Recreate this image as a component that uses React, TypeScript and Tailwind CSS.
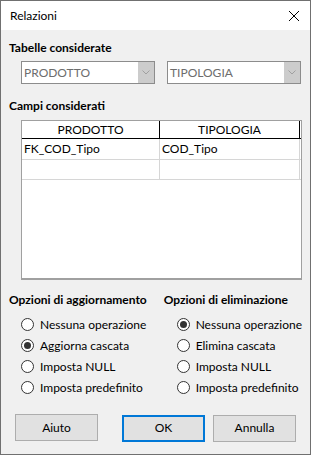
import * as React from "react";

const font = { fontFamily: '"Lato", "Noto Sans", sans-serif' };

const Radio = ({ checked, label }: { checked?: boolean; label: string }) => (
  <div className="flex items-center h-[21px] whitespace-nowrap">
    <span className="w-[13px] h-[13px] rounded-full border border-[#333] bg-white flex items-center justify-center">
      {checked && <span className="w-[7px] h-[7px] rounded-full bg-[#333]" />}
    </span>
    <span className="ml-[6px] text-[12px] text-black leading-none">{label}</span>
  </div>
);

const Combo = ({ value }: { value: string }) => (
  <div className="flex w-[134px] h-[23px] border border-[#8c8c8c] bg-white">
    <div className="flex-1 flex items-center pl-[2px] text-[12px] text-[#6d6d6d]">{value}</div>
    <div className="w-[16px] bg-[#cccccc] flex items-center justify-center">
      <svg width="8" height="5" viewBox="0 0 8 5">
        <path d="M0.5 0.5 L4 4 L7.5 0.5" fill="none" stroke="#a0a0a0" strokeWidth="1" />
      </svg>
    </div>
  </div>
);

const Button = ({ label, focused }: { label: string; focused?: boolean }) => (
  <button
    className={
      "w-[83px] h-[27px] bg-[#e1e1e1] text-[12px] text-black " +
      (focused ? "border-2 border-[#0078d7]" : "border border-[#adadad]")
    }
  >
    {label}
  </button>
);

export default function App() {
  const updOpts = ["Nessuna operazione", "Aggiorna cascata", "Imposta NULL", "Imposta predefinito"];
  const delOpts = ["Nessuna operazione", "Elimina cascata", "Imposta NULL", "Imposta predefinito"];

  return (
    <div className="w-[311px] h-[455px] border border-[#707070] bg-[#f0f0f0] flex flex-col" style={font}>
      <div className="h-[29px] bg-white flex items-center justify-between pl-[9px] pr-[10px]">
        <span className="text-[12px] text-black">Relazioni</span>
        <svg width="12" height="12" viewBox="0 0 12 12">
          <path d="M1 1 L11 11 M11 1 L1 11" stroke="#000" strokeWidth="1" />
        </svg>
      </div>

      <div className="flex flex-col px-[8px]">
        <div className="mt-[10px] h-[16px] text-[12px] font-bold leading-[16px] text-black whitespace-nowrap">Tabelle considerate</div>
        <div className="mt-[5px] ml-[12px] flex gap-[12px]">
          <Combo value="PRODOTTO" />
          <Combo value="TIPOLOGIA" />
        </div>

        <div className="mt-[14px] h-[16px] text-[12px] font-bold leading-[16px] text-black whitespace-nowrap">Campi considerati</div>
        <div className="mt-[6px] ml-[12px] w-[281px] h-[160px] border border-[#a0a0a0] border-b-2 bg-white flex flex-col">
          <div className="flex h-[18px] border-b border-[#000] text-[12px] text-black">
            <div className="w-[138px] flex items-center justify-center border-r border-[#000]">PRODOTTO</div>
            <div className="w-[140px] flex items-center justify-center border-r border-[#000]">TIPOLOGIA</div>
          </div>
          <div className="flex h-[21px] border-b border-[#d6d6d6] text-[12px] text-black w-[279px]">
            <div className="w-[138px] flex items-center pl-[2px] border-r border-[#d6d6d6]">FK_COD_Tipo</div>
            <div className="w-[140px] flex items-center pl-[2px] border-r border-[#d6d6d6]">COD_Tipo</div>
          </div>
          <div className="flex h-[20px] border-b border-[#d6d6d6] w-[279px]">
            <div className="w-[138px] border-r border-[#d6d6d6]" />
            <div className="w-[140px] border-r border-[#d6d6d6]" />
          </div>
        </div>

        <div className="mt-[12px] flex">
          <div className="w-[155px] flex flex-col">
            <div className="h-[16px] text-[12px] font-bold leading-[16px] text-black whitespace-nowrap">Opzioni di aggiornamento</div>
            <div className="mt-[6px] ml-[12px] flex flex-col">
              {updOpts.map((o, i) => (
                <Radio key={i} label={o} checked={i === 1} />
              ))}
            </div>
          </div>
          <div className="flex flex-col">
            <div className="h-[16px] text-[12px] font-bold leading-[16px] text-black whitespace-nowrap">Opzioni di eliminazione</div>
            <div className="mt-[6px] ml-[13px] flex flex-col">
              {delOpts.map((o, i) => (
                <Radio key={i} label={o} checked={i === 0} />
              ))}
            </div>
          </div>
        </div>

        <div className="mt-[16px] ml-[6px] flex">
          <Button label="Aiuto" />
          <div className="ml-[24px]">
            <Button label="OK" focused />
          </div>
          <div className="ml-[8px]">
            <Button label="Annulla" />
          </div>
        </div>
      </div>
    </div>
  );
}
